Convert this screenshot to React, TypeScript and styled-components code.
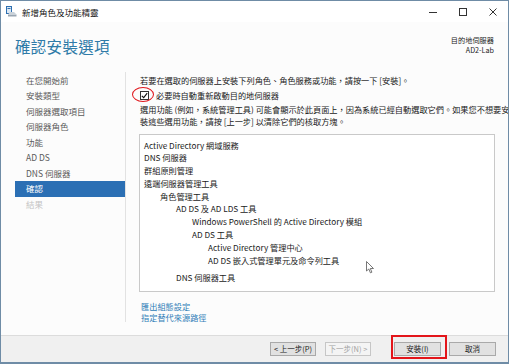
import React from "react";
import styled, { createGlobalStyle } from "styled-components";

const Global = createGlobalStyle`
  html, body { margin: 0; padding: 0; background: #fff; }
  * { box-sizing: border-box; }
`;

const FONT = `"Noto Sans CJK TC", "Noto Sans", sans-serif`;

const Window = styled.div`
  position: relative;
  width: 509px;
  height: 364px;
  border: 1px solid #6f8ca6;
  border-bottom-width: 2px;
  display: flex;
  flex-direction: column;
  background: #fcfcfc;
  font-family: ${FONT};
  font-size: 8.2px;
  color: #1a1a1a;
  overflow: hidden;
`;

const TitleBar = styled.div`
  height: 21px;
  display: flex;
  align-items: center;
  padding-left: 5px;
  background: #fff;
`;

const TitleText = styled.span`
  margin-left: 5px;
  font-size: 8.5px;
  color: #111;
`;

const Controls = styled.div`
  margin-left: auto;
  display: flex;
  height: 100%;
`;

const ControlButton = styled.div`
  width: 30px;
  height: 100%;
  display: flex;
  align-items: center;
  justify-content: center;
`;

const Body = styled.div`
  flex: 1;
  display: flex;
  flex-direction: column;
  min-height: 0;
`;

const Header = styled.div`
  height: 48px;
  display: flex;
  justify-content: space-between;
  padding: 0 14px 0 14px;
`;

const PageTitle = styled.h1`
  margin: 14px 0 0 0;
  font-size: 15.5px;
  line-height: 20px;
  font-weight: 400;
  color: #2f7ba8;
  letter-spacing: 0.3px;
`;

const Destination = styled.div`
  margin-top: 14px;
  text-align: right;
  font-size: 7.2px;
  line-height: 9.5px;
  color: #222;
`;

const Main = styled.div`
  flex: 1;
  display: flex;
  min-height: 0;
`;

const Nav = styled.nav`
  flex: 0 0 124px;
  padding: 2.5px 0 0 14px;
  display: flex;
  flex-direction: column;
`;

const NavItem = styled.div<{ $state: "normal" | "active" | "disabled" }>`
  height: 15.5px;
  line-height: 15.5px;
  padding-left: 11px;
  font-size: 8.5px;
  color: ${(p) =>
    p.$state === "active" ? "#fff" : p.$state === "disabled" ? "#c4c4c4" : "#5a5a5a"};
  background: ${(p) => (p.$state === "active" ? "#2b6fb4" : "transparent")};
`;

const Divider = styled.div`
  flex: 0 0 1px;
  height: 250px;
  margin-top: 2px;
  background: #e2e2e2;
`;

const Content = styled.div`
  flex: 1;
  min-width: 0;
  padding: 4px 13px 0 13px;
  display: flex;
  flex-direction: column;
`;

const Line = styled.div`
  line-height: 12px;
  white-space: nowrap;
  padding-left: 1px;
`;

const CheckRow = styled.label`
  margin-top: 3px;
  height: 12px;
  display: flex;
  align-items: center;
  padding-left: 1px;
  gap: 7px;
  white-space: nowrap;
`;

const CheckWrap = styled.span`
  position: relative;
  width: 9px;
  height: 9px;
  display: inline-flex;
`;

const CheckBox = styled.span`
  width: 9px;
  height: 9px;
  border: 1px solid #333;
  background: #fff;
  display: flex;
  align-items: center;
  justify-content: center;
`;

const RedEllipse = styled.span`
  position: absolute;
  left: -8px;
  right: -5px;
  top: -4px;
  bottom: -2px;
  border: 1.6px solid #e0161b;
  border-radius: 50%;
`;

const Description = styled.div`
  margin-top: 2px;
`;

const ListBox = styled.div`
  position: relative;
  margin-top: 7px;
  height: 158px;
  border: 1px solid #c9c9c9;
  background: #fff;
  padding: 3.5px 0 0 4px;
`;

const ListItem = styled.div<{ $level: number; $gap?: boolean }>`
  line-height: 12.8px;
  white-space: nowrap;
  padding-left: ${(p) => p.$level * 16}px;
  margin-top: ${(p) => (p.$gap ? 5 : 0)}px;
  color: #1a1a1a;
`;

const Cursor = styled.svg`
  position: absolute;
  left: 226px;
  top: 126px;
`;

const Links = styled.div`
  margin-top: 8.5px;
  padding-left: 2px;
  display: flex;
  flex-direction: column;
`;

const LinkText = styled.a`
  line-height: 11px;
  color: #2f7db7;
  text-decoration: none;
  font-size: 8.2px;
`;

const Footer = styled.div`
  height: 27px;
  border-top: 1px solid #dcdcdc;
  background: #f0f0f0;
  display: flex;
  justify-content: flex-end;
  align-items: flex-start;
  padding: 6px 12px 0 0;
`;

const Button = styled.button<{ $w: number; $disabled?: boolean; $ml?: number }>`
  width: ${(p) => p.$w}px;
  height: 14px;
  margin-left: ${(p) => p.$ml ?? 0}px;
  padding: 0;
  font-family: ${FONT};
  font-size: 7.5px;
  line-height: 12px;
  color: ${(p) => (p.$disabled ? "#a3a3a3" : "#1a1a1a")};
  background: ${(p) => (p.$disabled ? "#f4f4f4" : "#e1e1e1")};
  border: 1px solid ${(p) => (p.$disabled ? "#c6c6c6" : "#a9a9a9")};
  border-radius: 0;
`;

const ButtonWrap = styled.span<{ $ml: number }>`
  position: relative;
  margin-left: ${(p) => p.$ml}px;
  display: inline-flex;
`;

const RedRect = styled.span`
  position: absolute;
  left: -3px;
  right: -6px;
  top: -7px;
  bottom: -3px;
  border: 2px solid #e3151a;
`;

const navItems: { label: string; state: "normal" | "active" | "disabled" }[] = [
  { label: "在您開始前", state: "normal" },
  { label: "安裝類型", state: "normal" },
  { label: "伺服器選取項目", state: "normal" },
  { label: "伺服器角色", state: "normal" },
  { label: "功能", state: "normal" },
  { label: "AD DS", state: "normal" },
  { label: "DNS 伺服器", state: "normal" },
  { label: "確認", state: "active" },
  { label: "結果", state: "disabled" },
];

const listItems: { label: string; level: number; gap?: boolean }[] = [
  { label: "Active Directory 網域服務", level: 0 },
  { label: "DNS 伺服器", level: 0 },
  { label: "群組原則管理", level: 0 },
  { label: "遠端伺服器管理工具", level: 0 },
  { label: "角色管理工具", level: 1 },
  { label: "AD DS 及 AD LDS 工具", level: 2 },
  { label: "Windows PowerShell 的 Active Directory 模組", level: 3 },
  { label: "AD DS 工具", level: 3 },
  { label: "Active Directory 管理中心", level: 4 },
  { label: "AD DS 嵌入式管理單元及命令列工具", level: 4 },
  { label: "DNS 伺服器工具", level: 2, gap: true },
];

const AppIcon = () => (
  <svg width="11" height="11" viewBox="0 0 11 11">
    <rect x="0.5" y="0.5" width="5" height="7" fill="#dbe8f5" stroke="#2d6fb0" />
    <rect x="1.5" y="2" width="3" height="1" fill="#2d6fb0" />
    <path d="M2 8.5 H10.5 V10.5 H2 Z" fill="#9aa6b2" />
    <path d="M4 6 L8 6 L10.5 8.5 L2 8.5 Z" fill="#c9d2da" />
  </svg>
);

export default function App() {
  return (
    <>
      <Global />
      <Window>
        <TitleBar>
          <AppIcon />
          <TitleText>新增角色及功能精靈</TitleText>
          <Controls>
            <ControlButton>
              <svg width="10" height="10" viewBox="0 0 10 10">
                <path d="M1 5.5 H9" stroke="#333" strokeWidth="1" />
              </svg>
            </ControlButton>
            <ControlButton>
              <svg width="10" height="10" viewBox="0 0 10 10">
                <rect x="1.5" y="1.5" width="7" height="7" fill="none" stroke="#333" strokeWidth="1" />
              </svg>
            </ControlButton>
            <ControlButton>
              <svg width="10" height="10" viewBox="0 0 10 10">
                <path d="M1.5 1.5 L8.5 8.5 M8.5 1.5 L1.5 8.5" stroke="#333" strokeWidth="1" />
              </svg>
            </ControlButton>
          </Controls>
        </TitleBar>
        <Body>
          <Header>
            <PageTitle>確認安裝選項</PageTitle>
            <Destination>
              <div>目的地伺服器</div>
              <div>AD2-Lab</div>
            </Destination>
          </Header>
          <Main>
            <Nav>
              {navItems.map((n) => (
                <NavItem key={n.label} $state={n.state}>
                  {n.label}
                </NavItem>
              ))}
            </Nav>
            <Divider />
            <Content>
              <Line>若要在選取的伺服器上安裝下列角色、角色服務或功能，請按一下 [安裝]。</Line>
              <CheckRow>
                <CheckWrap>
                  <CheckBox>
                    <svg width="7" height="7" viewBox="0 0 7 7">
                      <path d="M0.8 3.8 L2.7 5.6 L6.2 1.2" fill="none" stroke="#111" strokeWidth="1.1" />
                    </svg>
                  </CheckBox>
                  <RedEllipse />
                </CheckWrap>
                <span>必要時自動重新啟動目的地伺服器</span>
              </CheckRow>
              <Description>
                <Line>選用功能 (例如，系統管理工具) 可能會顯示於此頁面上，因為系統已經自動選取它們。如果您不想要安</Line>
                <Line>裝這些選用功能，請按 [上一步] 以清除它們的核取方塊。</Line>
              </Description>
              <ListBox>
                {listItems.map((it) => (
                  <ListItem key={it.label} $level={it.level} $gap={it.gap}>
                    {it.label}
                  </ListItem>
                ))}
                <Cursor width="9" height="13" viewBox="0 0 9 13">
                  <path
                    d="M0.5 0.5 L0.5 10 L2.8 8 L4.4 11.8 L5.9 11.2 L4.3 7.5 L7.5 7.5 Z"
                    fill="#fff"
                    stroke="#555"
                    strokeWidth="0.8"
                    strokeLinejoin="round"
                  />
                </Cursor>
              </ListBox>
              <Links>
                <LinkText href="#">匯出組態設定</LinkText>
                <LinkText href="#">指定替代來源路徑</LinkText>
              </Links>
            </Content>
          </Main>
          <Footer>
            <Button $w={46}>&lt; 上一步(P)</Button>
            <Button $w={46} $ml={9} $disabled>
              下一步(N) &gt;
            </Button>
            <ButtonWrap $ml={23}>
              <Button $w={47}>安裝(I)</Button>
              <RedRect />
            </ButtonWrap>
            <Button $w={47} $ml={8}>
              取消
            </Button>
          </Footer>
        </Body>
      </Window>
    </>
  );
}
